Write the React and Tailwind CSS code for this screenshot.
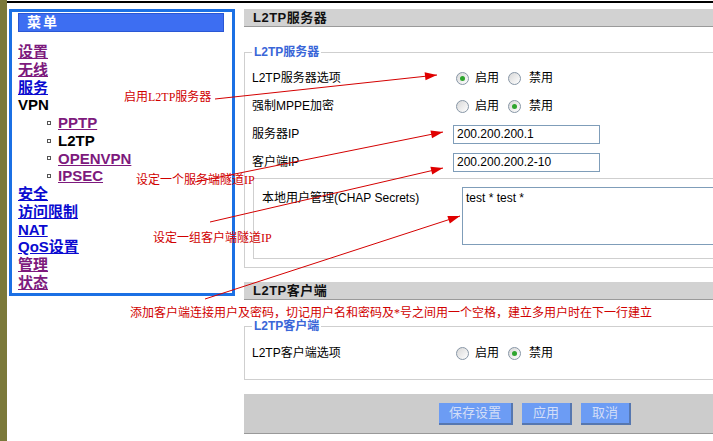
import React from 'react';

const sans = "font-['Liberation_Sans','Noto_Sans_CJK_SC',sans-serif]";

const navItems = [
  { t: '设置', c: 'purple' },
  { t: '无线', c: 'purple' },
  { t: '服务', c: 'blue' },
  { t: 'VPN', c: 'plain' },
  { t: 'PPTP', c: 'purple', sub: true },
  { t: 'L2TP', c: 'plain', sub: true },
  { t: 'OPENVPN', c: 'purple', sub: true },
  { t: 'IPSEC', c: 'purple', sub: true },
  { t: '安全', c: 'blue' },
  { t: '访问限制', c: 'blue' },
  { t: 'NAT', c: 'blue' },
  { t: 'QoS设置', c: 'blue' },
  { t: '管理', c: 'purple' },
  { t: '状态', c: 'purple' },
];

const colorClass = {
  purple: 'text-[#7d1a7d] underline',
  blue: 'text-[#0a0ad0] underline',
  plain: 'text-black',
};

const Radio = ({ checked }) => (
  <span className="inline-flex h-[13px] w-[13px] items-center justify-center rounded-full border border-[#8796a6] bg-linear-to-br from-[#d8d8d8] to-white">
    {checked && <span className="h-[5px] w-[5px] rounded-full bg-[#2ea52e]" />}
  </span>
);

const RadioPair = ({ on }) => (
  <div className="ml-[3px] flex items-center">
    <Radio checked={on} />
    <span className="ml-[6px]">启用</span>
    <span className="ml-[9px] flex"><Radio checked={!on} /></span>
    <span className="ml-[8px]">禁用</span>
  </div>
);

const SectionHead = ({ children }) => (
  <div className="flex h-[18px] items-center border-b border-[#9a9a9a] bg-[#d2d2d2] pl-[9px] text-[13px] font-bold tracking-[0.5px] text-[#111]">
    {children}
  </div>
);

const Row = ({ label, children }) => (
  <div className="flex h-[28px] items-center">
    <div className="w-[201px] shrink-0">{label}</div>
    {children}
  </div>
);

const Legend = ({ children }) => (
  <legend className="px-[2px] text-[12px] font-bold leading-[14px] text-[#3a66d8]">{children}</legend>
);

const arrows = [
  [215, 99, 437, 75],
  [195, 182, 443, 132],
  [210, 222, 443, 168],
  [205, 299, 460, 216],
];

const notes = [
  { t: '启用L2TP服务器', x: 124, y: 89 },
  { t: '设定一个服务端隧道IP', x: 136, y: 172 },
  { t: '设定一组客户端隧道IP', x: 153, y: 230 },
  { t: '添加客户端连接用户及密码，切记用户名和密码及*号之间用一个空格，建立多用户时在下一行建立', x: 130, y: 305 },
];

function head(x1, y1, x2, y2) {
  const dx = x2 - x1;
  const dy = y2 - y1;
  const len = Math.hypot(dx, dy);
  const ux = dx / len;
  const uy = dy / len;
  const bx = x2 - ux * 12;
  const by = y2 - uy * 12;
  return `${x2},${y2} ${bx - uy * 4},${by + ux * 4} ${bx + uy * 4},${by - ux * 4}`;
}

export default function App() {
  return (
    <div className={`relative flex h-[441px] w-[713px] overflow-hidden bg-white ${sans}`}>
      <div className="w-[7px] shrink-0 bg-[#7b793a]" />

      <div className="flex-1">
        <div className="mt-[1px] h-[2px] bg-black" />

        <div className="flex items-start">
          {/* menu */}
          <div className="ml-[2px] mt-[6px] h-[287px] w-[226px] shrink-0 border-[3px] border-[#1b70e4]">
            <div className="ml-[6px] mt-[1px] flex h-[19px] w-[206px] items-center border border-[#2a57d4] bg-[#3d6ef2] pl-[8px] text-[14px] font-bold tracking-[2px] text-white">
              菜单
            </div>
            <div className="ml-[6px] mt-[11px] text-[15px] font-bold leading-[17.75px]">
              {navItems.map((it) => (
                <div key={it.t} className={`flex items-center ${it.sub ? 'pl-[29px]' : ''}`}>
                  {it.sub && <span className="mr-[7px] h-[4px] w-[4px] border border-[#555]" />}
                  <span className={colorClass[it.c]}>{it.t}</span>
                </div>
              ))}
            </div>
          </div>

          {/* main panel */}
          <div className="ml-[9px] mt-[6px] w-[480px] shrink-0 text-[12px] text-black">
            <SectionHead>L2TP服务器</SectionHead>

            <fieldset className="mt-[18px] border border-[#cfcfcf] pb-[8px] pl-[7px]">
              <Legend>L2TP服务器</Legend>
              <div className="pt-[5px]">
                <Row label="L2TP服务器选项"><RadioPair on /></Row>
                <Row label="强制MPPE加密"><RadioPair on={false} /></Row>
                <Row label="服务器IP">
                  <input readOnly value="200.200.200.1" className="h-[19px] w-[147px] border border-[#7f9db9] px-[3px] text-[12px] outline-none" />
                </Row>
                <Row label="客户端IP">
                  <input readOnly value="200.200.200.2-10" className="h-[19px] w-[147px] border border-[#7f9db9] px-[3px] text-[12px] outline-none" />
                </Row>
              </div>
              <div className="ml-[1px] mt-[2px] flex border border-[#cfcfcf] pb-[13px] pl-[8px] pt-[8px]">
                <div className="w-[200px] shrink-0 pt-[2px] text-[12px]">本地用户管理(CHAP Secrets)</div>
                <textarea
                  readOnly
                  value="test * test *"
                  className="h-[58px] flex-1 resize-none border border-[#7f9db9] px-[3px] py-[2px] text-[12px] leading-[16px] outline-none"
                />
              </div>
            </fieldset>

            <div className="mt-[14px]">
              <SectionHead>L2TP客户端</SectionHead>
            </div>

            <fieldset className="mt-[19px] border border-[#cfcfcf] pb-[12px] pl-[7px]">
              <Legend>L2TP客户端</Legend>
              <div className="pt-[6px]">
                <Row label="L2TP客户端选项"><RadioPair on={false} /></Row>
              </div>
            </fieldset>

            <div className="mt-[14px] flex h-[40px] items-center border-b border-[#999] bg-[#cccccc] pl-[195px]">
              {['保存设置', '应用', '取消'].map((b, i) => (
                <button
                  key={b}
                  className={`h-[22px] border-b-2 border-r-2 border-[#5677b0] bg-[#6c9cf4] text-[13px] text-[#d3def7] ${i === 0 ? 'w-[74px]' : 'w-[50px]'} ${i > 0 ? 'ml-[9px]' : ''}`}
                >
                  {b}
                </button>
              ))}
            </div>
          </div>
        </div>
      </div>

      {/* annotations */}
      <svg className="pointer-events-none absolute left-0 top-0" width="713" height="441">
        {arrows.map(([x1, y1, x2, y2], i) => (
          <g key={i}>
            <line x1={x1} y1={y1} x2={x2} y2={y2} stroke="#d40000" strokeWidth="1" />
            <polygon points={head(x1, y1, x2, y2)} fill="#e00000" />
          </g>
        ))}
      </svg>
      {notes.map((n) => (
        <div
          key={n.t}
          className="pointer-events-none absolute whitespace-nowrap font-['Liberation_Serif','Noto_Sans_CJK_SC',serif] text-[12px] leading-[14px] text-[#d00000]"
          style={{ left: n.x, top: n.y + 1 }}
        >
          {n.t}
        </div>
      ))}
    </div>
  );
}
